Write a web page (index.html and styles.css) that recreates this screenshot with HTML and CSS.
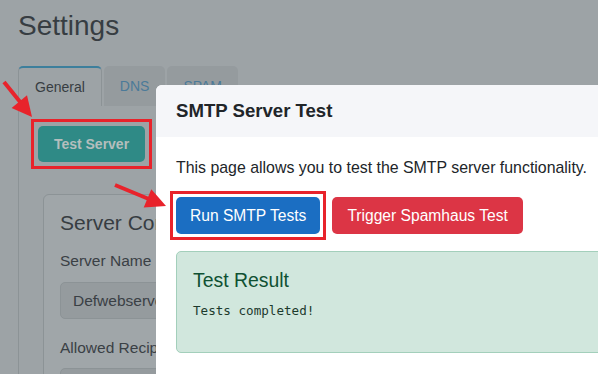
FILE: index.html
```html
<!DOCTYPE html>
<html lang="en">
<head>
    <meta charset="UTF-8">
    <meta name="viewport" content="width=device-width, initial-scale=1.0">
    <title>Settings</title>
    <link rel="stylesheet" href="styles.css">
</head>
<body>
    <div class="page">
        <h1>Settings</h1>
        <div class="tabs">
            <div class="tab active">General</div>
            <div class="tab">DNS</div>
            <div class="tab">SPAM</div>
        </div>
        <div class="tab-pane">
            <span class="mark mark-wide"><button class="btn-teal">Test Server</button></span>
            <div class="card">
                <h3>Server Configuration</h3>
                <label>Server Name</label>
                <div class="input">Defwebserver</div>
                <label class="second">Allowed Recipients</label>
                <div class="input"></div>
            </div>
        </div>
    </div>

    <div class="modal">
        <div class="modal-header">
            <h5>SMTP Server Test</h5>
        </div>
        <div class="modal-body">
            <p>This page allows you to test the SMTP server functionality.</p>
            <div class="actions">
                <span class="mark"><button class="btn btn-blue">Run SMTP Tests</button></span>
                <button class="btn btn-red">Trigger Spamhaus Test</button>
            </div>
            <div class="result">
                <h4>Test Result</h4>
                <pre>Tests completed!</pre>
            </div>
        </div>
    </div>

    <!-- annotation arrows -->
    <svg class="arrows" width="598" height="374" viewBox="0 0 598 374">
        <line x1="4" y1="82" x2="21" y2="103" stroke="#e8232b" stroke-width="4"/>
        <polygon points="32,117 11.6,108 27,95.2" fill="#e8232b"/>
        <line x1="115" y1="185" x2="150" y2="199.5" stroke="#e8232b" stroke-width="4"/>
        <polygon points="166,206 143.7,207.6 151.3,189.2" fill="#e8232b"/>
    </svg>
</body>
</html>
```

FILE: styles.css
```css
* {
    margin: 0;
    padding: 0;
    box-sizing: border-box;
}

body {
    font-family: 'Liberation Sans', Arial, sans-serif;
    background: #9da3a6;
    color: #3a4045;
    width: 598px;
    height: 374px;
    overflow: hidden;
    position: relative;
}

.page {
    padding: 9px 0 0 18px;
}

.page h1 {
    font-size: 28px;
    font-weight: 400;
    line-height: 1.2;
    color: #373d42;
    margin-bottom: 23px;
}

.tabs {
    display: flex;
    gap: 2px;
}

.tab {
    height: 40px;
    display: flex;
    align-items: center;
    padding: 0 16px;
    font-size: 14px;
    color: #4b7a99;
    background: #959b9e;
    border-radius: 5px 5px 0 0;
}

.tab.active {
    background: #9da3a6;
    color: #373d42;
    border: 1px solid #8c9396;
    border-top: 2px solid #3d7f9c;
    border-bottom: none;
}

.tab-pane {
    border-left: 1px solid #8c9396;
    padding: 20px 0 0 19px;
}

/* red annotation box, square corners */
.mark {
    display: inline-flex;
    outline: 3px solid #e8232b;
    outline-offset: 3px;
}

.mark-wide {
    outline-offset: 4px;
}

.btn-teal {
    width: 107px;
    height: 36px;
    border: none;
    border-radius: 5px;
    background: #2f8a86;
    color: #b4bebd;
    font-family: inherit;
    font-size: 14px;
    font-weight: 700;
}

.card {
    margin: 32px 0 0 5px;
    border: 1px solid #8c9396;
    border-radius: 6px;
    background: #a0a6a9;
    padding: 15px 16px 0;
    height: 200px;
}

.card h3 {
    font-size: 21px;
    font-weight: 400;
    line-height: 1.2;
    color: #373d42;
    margin-bottom: 14px;
    white-space: nowrap;
}

.card label {
    display: block;
    font-size: 15.5px;
    line-height: 1.5;
    margin-bottom: 10px;
}

.card label.second {
    margin-top: 17px;
    margin-bottom: 9px;
}

.input {
    height: 37px;
    border: 1px solid #8c9396;
    border-radius: 5px;
    background: #959b9e;
    padding: 0 12px;
    display: flex;
    align-items: center;
    font-size: 15.5px;
    color: #3a4045;
}

/* modal */
.modal {
    position: absolute;
    left: 156px;
    top: 85px;
    width: 442px;
    height: 289px;
    overflow: hidden;
    background: #fff;
    border-radius: 6px 0 0 0;
    color: #212529;
}

.modal-header {
    height: 52px;
    background: #f5f6f9;
    padding: 0 20px;
    display: flex;
    align-items: center;
}

.modal-header h5 {
    font-size: 18.6px;
    font-weight: 700;
    line-height: 22px;
}

.modal-body {
    width: 480px;
    padding: 20px 20px 0;
}

.modal-body p {
    font-size: 15.9px;
    line-height: 22px;
    white-space: nowrap;
}

.actions {
    display: flex;
    gap: 12px;
    margin-top: 18px;
}

.btn {
    height: 37px;
    padding: 0 14px;
    border: none;
    border-radius: 5px;
    color: #fff;
    font-family: inherit;
    font-size: 15.6px;
}

.btn-blue {
    background: #1b6ec2;
}

.btn-red {
    background: #dc3545;
    padding: 0 15px;
}

.result {
    margin-top: 17px;
    height: 102px;
    background: #d1e7dd;
    border: 1px solid #a3cfbb;
    border-radius: 5px;
    padding: 17px 16px 0;
}

.result h4 {
    font-size: 19.4px;
    font-weight: 400;
    line-height: 1.2;
    color: #0f5132;
    margin-bottom: 10px;
}

.result pre {
    font-family: 'DejaVu Sans Mono', 'Liberation Mono', monospace;
    font-size: 12.6px;
    line-height: 1.5;
    color: #1c3a2d;
}

.arrows {
    position: absolute;
    left: 0;
    top: 0;
}
```
